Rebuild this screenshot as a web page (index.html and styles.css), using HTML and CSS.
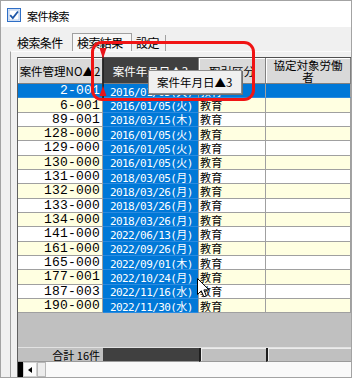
FILE: index.html
```html
<!DOCTYPE html>
<html lang="ja">
<head>
<meta charset="utf-8">
<title>案件検索</title>
<link rel="stylesheet" href="styles.css">
</head>
<body>
<div class="window">
  <div class="titlebar">
    <svg class="appicon" width="14" height="14" viewBox="0 0 14 14">
      <rect x="0.5" y="0.5" width="13" height="13" fill="#eef4fc" stroke="#2f6fc6"/>
      <rect x="2" y="2" width="10" height="10" fill="#ffffff" stroke="#9dbbe6" stroke-width="0.8"/>
      <path d="M3.2 7.2 L5.8 10 L11 3.5" fill="none" stroke="#1d56a8" stroke-width="1.8"/>
    </svg>
    <span class="title">案件検索</span>
  </div>
  <div class="tabs">
    <div class="tab">検索条件</div>
    <div class="tab active">検索結果</div>
    <div class="tab last">設定</div>
  </div>
  <div class="panel">
    <div class="grid">
      <div class="row head">
        <div class="c c1">案件管理NO▲2</div>
        <div class="c c2">案件年月日▲3</div>
        <div class="c c3">取引区分</div>
        <div class="c c4">協定対象労働<br>者</div>
      </div>
      <div class="rows">
        <div class="row sel"><div class="c c1">2-001</div><div class="c c2">2016/01/05(火)</div><div class="c c3">教育</div><div class="c c4"></div></div>
        <div class="row even"><div class="c c1">6-001</div><div class="c c2">2016/01/05(火)</div><div class="c c3">教育</div><div class="c c4"></div></div>
        <div class="row"><div class="c c1">89-001</div><div class="c c2">2018/03/15(木)</div><div class="c c3">教育</div><div class="c c4"></div></div>
        <div class="row even"><div class="c c1">128-000</div><div class="c c2">2016/01/05(火)</div><div class="c c3">教育</div><div class="c c4"></div></div>
        <div class="row"><div class="c c1">129-000</div><div class="c c2">2016/01/05(火)</div><div class="c c3">教育</div><div class="c c4"></div></div>
        <div class="row even"><div class="c c1">130-000</div><div class="c c2">2016/01/05(火)</div><div class="c c3">教育</div><div class="c c4"></div></div>
        <div class="row"><div class="c c1">131-000</div><div class="c c2">2018/03/05(月)</div><div class="c c3">教育</div><div class="c c4"></div></div>
        <div class="row even"><div class="c c1">132-000</div><div class="c c2">2018/03/26(月)</div><div class="c c3">教育</div><div class="c c4"></div></div>
        <div class="row"><div class="c c1">133-000</div><div class="c c2">2018/03/26(月)</div><div class="c c3">教育</div><div class="c c4"></div></div>
        <div class="row even"><div class="c c1">134-000</div><div class="c c2">2018/03/26(月)</div><div class="c c3">教育</div><div class="c c4"></div></div>
        <div class="row"><div class="c c1">141-000</div><div class="c c2">2022/06/13(月)</div><div class="c c3">教育</div><div class="c c4"></div></div>
        <div class="row even"><div class="c c1">161-000</div><div class="c c2">2022/09/26(月)</div><div class="c c3">教育</div><div class="c c4"></div></div>
        <div class="row"><div class="c c1">165-000</div><div class="c c2">2022/09/01(木)</div><div class="c c3">教育</div><div class="c c4"></div></div>
        <div class="row even"><div class="c c1">177-001</div><div class="c c2">2022/10/24(月)</div><div class="c c3">教育</div><div class="c c4"></div></div>
        <div class="row"><div class="c c1">187-003</div><div class="c c2">2022/11/16(水)</div><div class="c c3">教育</div><div class="c c4"></div></div>
        <div class="row even"><div class="c c1">190-000</div><div class="c c2">2022/11/30(水)</div><div class="c c3">教育</div><div class="c c4"></div></div>
      </div>
      <div class="fill"></div>
      <div class="row foot">
        <div class="c c1">合計 16件</div>
        <div class="c c2"></div>
        <div class="c c3"></div>
        <div class="c c4"></div>
      </div>
      <div class="hscroll">
        <div class="sb-black"></div>
        <div class="sb-btn"><svg width="4" height="6" viewBox="0 0 4 6"><path d="M4 0 L0 3 L4 6 Z" fill="#000"/></svg></div>
        <div class="sb-thumb"></div>
        <div class="sb-track"></div>
      </div>
    </div>
  </div>

  <div class="tooltip">案件年月日▲3</div>
  <svg class="dragmark" width="13" height="62" viewBox="0 0 13 62">
    <line x1="6" y1="2" x2="6" y2="60" stroke="#1e1e1e" stroke-width="1.6"/>
    <polygon points="2.5,7 9.5,7 6,18" fill="#e8141b"/>
    <polygon points="6,45 9.5,55 2.5,55" fill="#e8141b"/>
  </svg>
  <div class="redbox"></div>
  <svg class="cursor" width="14" height="21" viewBox="0 0 14 21">
    <path d="M0.5 0.5 L0.5 16.5 L4.3 12.8 L6.8 18.8 L9.3 17.8 L6.9 11.9 L12 11.9 Z" fill="#fff" stroke="#000" stroke-width="1" stroke-linejoin="miter"/>
  </svg>
</div>
</body>
</html>
```

FILE: styles.css
```css
html, body {
  margin: 0;
  padding: 0;
  background: #ffffff;
}

body {
  font-family: "Noto Sans CJK JP", sans-serif;
  font-size: 12px;
  color: #000;
}

.window {
  position: relative;
  width: 352px;
  height: 378px;
  box-sizing: border-box;
  border: 1px solid #a3a3a3;
  background: #f0f0f0;
  display: flex;
  flex-direction: column;
  overflow: hidden;
}

/* title bar */
.titlebar {
  height: 26px;
  flex: none;
  background: #ffffff;
  display: flex;
  align-items: center;
  padding-left: 6px;
  box-sizing: border-box;
}

.appicon {
  flex: none;
  margin-top: 2px;
}

.title {
  margin-left: 6px;
  font-size: 11px;
  letter-spacing: -0.5px;
  line-height: 12px;
  margin-top: 3px;
}

/* tabs */
.tabs {
  height: 24px;
  flex: none;
  display: flex;
  align-items: flex-end;
  padding-left: 11px;
  box-sizing: border-box;
}

.tab {
  height: 16px;
  box-sizing: border-box;
  padding-left: 5px;
  width: 60px;
  font-size: 12px;
  letter-spacing: -0.6px;
  line-height: 15px;
}

.tab.active {
  height: 18px;
  width: 60px;
  padding-left: 4px;
  border: 1px solid #a0a0a0;
  border-bottom: none;
  background: #f7f7f7;
  line-height: 17px;
}

.tab.last {
  width: 34px;
  padding-left: 4px;
  border-right: 1px solid #a0a0a0;
}

/* tab panel */
.panel {
  flex: 1;
  margin-left: 9px;
  border-top: 1px solid #fbfbfb;
  border-left: 1px solid #a0a0a0;
  padding: 5px 0 0 6px;
  display: flex;
  flex-direction: column;
  min-height: 0;
}

.grid {
  flex: 1;
  display: flex;
  flex-direction: column;
  border-top: 1px solid #505050;
  border-left: 1px solid #606060;
  background: #c0c0c0;
  min-height: 0;
}

.row {
  display: flex;
  flex: none;
}

.c {
  flex: none;
  box-sizing: border-box;
  overflow: hidden;
  white-space: nowrap;
}

.c1 { width: 85px; }
.c2 { width: 96px; }
.c3 { width: 67px; }
.c4 { width: 85px; }

/* header */
.head .c {
  height: 26px;
  background: #d9d9d9;
  border-right: 1px solid #808080;
  border-bottom: 1px solid #808080;
  box-shadow: inset 1px 1px 0 #ffffff;
  font-size: 11.5px;
  line-height: 12px;
  text-align: center;
  display: flex;
  align-items: center;
  justify-content: center;
  white-space: normal;
}

.head .c2 {
  background: #404040;
  color: #ffffff;
  box-shadow: none;
}

.head .c4 {
  line-height: 12.5px;
  padding-top: 1px;
}

/* body rows */
.rows {
  display: flex;
  flex-direction: column;
  flex: none;
}

.rows .row {
  height: calc(43px / 3);
  background: #ffffff;
}

.rows .row.even {
  background: #ffffe1;
}

.rows .c {
  height: 100%;
  border-right: 1px solid #a0a0a0;
  border-bottom: 1px solid #a0a0a0;
  display: flex;
  align-items: center;
}

.rows .c1 {
  justify-content: flex-end;
  padding-right: 2px;
  font-family: "Liberation Mono", "Noto Sans CJK JP", monospace;
  font-size: 13px;
  letter-spacing: 0.2px;
}

.rows .c2 {
  background: #0078d7;
  color: #ffffff;
  padding-left: 7px;
  border-bottom-color: #2a8ae0;
  font-family: "DejaVu Sans Mono", "Noto Sans CJK JP", monospace;
  font-size: 11px;
  letter-spacing: -0.6px;
}

.rows .c3 {
  padding-left: 1px;
  font-size: 11px;
  letter-spacing: 0.3px;
}

.rows .row.sel .c {
  background: #0078d7;
  color: #ffffff;
  border-bottom-color: #2a8ae0;
}

.fill {
  flex: 1;
  background: #c0c0c0;
}

/* footer */
.foot {
  height: 15px;
  border-top: 1px solid #e2e2e2;
  box-sizing: border-box;
}

.foot .c {
  height: 14px;
  background: #c0c0c0;
  border-bottom: 1px solid #9a9a9a;
}

.foot .c1 {
  display: flex;
  align-items: center;
  justify-content: flex-end;
  padding-right: 3px;
  font-size: 11px;
  line-height: 12px;
}

.foot .c2 {
  background: #404040;
}

.foot .c3,
.foot .c4 {
  border-left: 2px solid #1e1e1e;
  box-shadow: inset 1px 1px 0 #ececec;
}

/* horizontal scrollbar */
.hscroll {
  height: 15px;
  flex: none;
  display: flex;
  background: #f8f8f8;
}

.sb-black {
  width: 5px;
  background: #000000;
}

.sb-btn {
  width: 14px;
  box-sizing: border-box;
  background: #fbfbfb;
  border: 1px solid #d0d0d0;
  display: flex;
  align-items: center;
  justify-content: center;
}

.sb-thumb {
  width: 9px;
  box-sizing: border-box;
  background: #ececec;
  border: 1px solid #b8b8b8;
}

.sb-track {
  flex: 1;
  background: #f9f9f9;
}

/* overlays */
.tooltip {
  position: absolute;
  left: 147px;
  top: 69px;
  width: 94px;
  height: 24px;
  box-sizing: border-box;
  background: #f0f0f0;
  border: 1px solid #8c8c8c;
  box-shadow: 1px 1px 0 #707070;
  padding-left: 8px;
  font-size: 11.5px;
  line-height: 22px;
  white-space: nowrap;
}

.dragmark {
  position: absolute;
  left: 96px;
  top: 40px;
}

.redbox {
  position: absolute;
  left: 90px;
  top: 40px;
  width: 164px;
  height: 60px;
  box-sizing: border-box;
  border: 3px solid #f01414;
  border-radius: 11px;
}

.cursor {
  position: absolute;
  left: 196px;
  top: 277px;
}
```
